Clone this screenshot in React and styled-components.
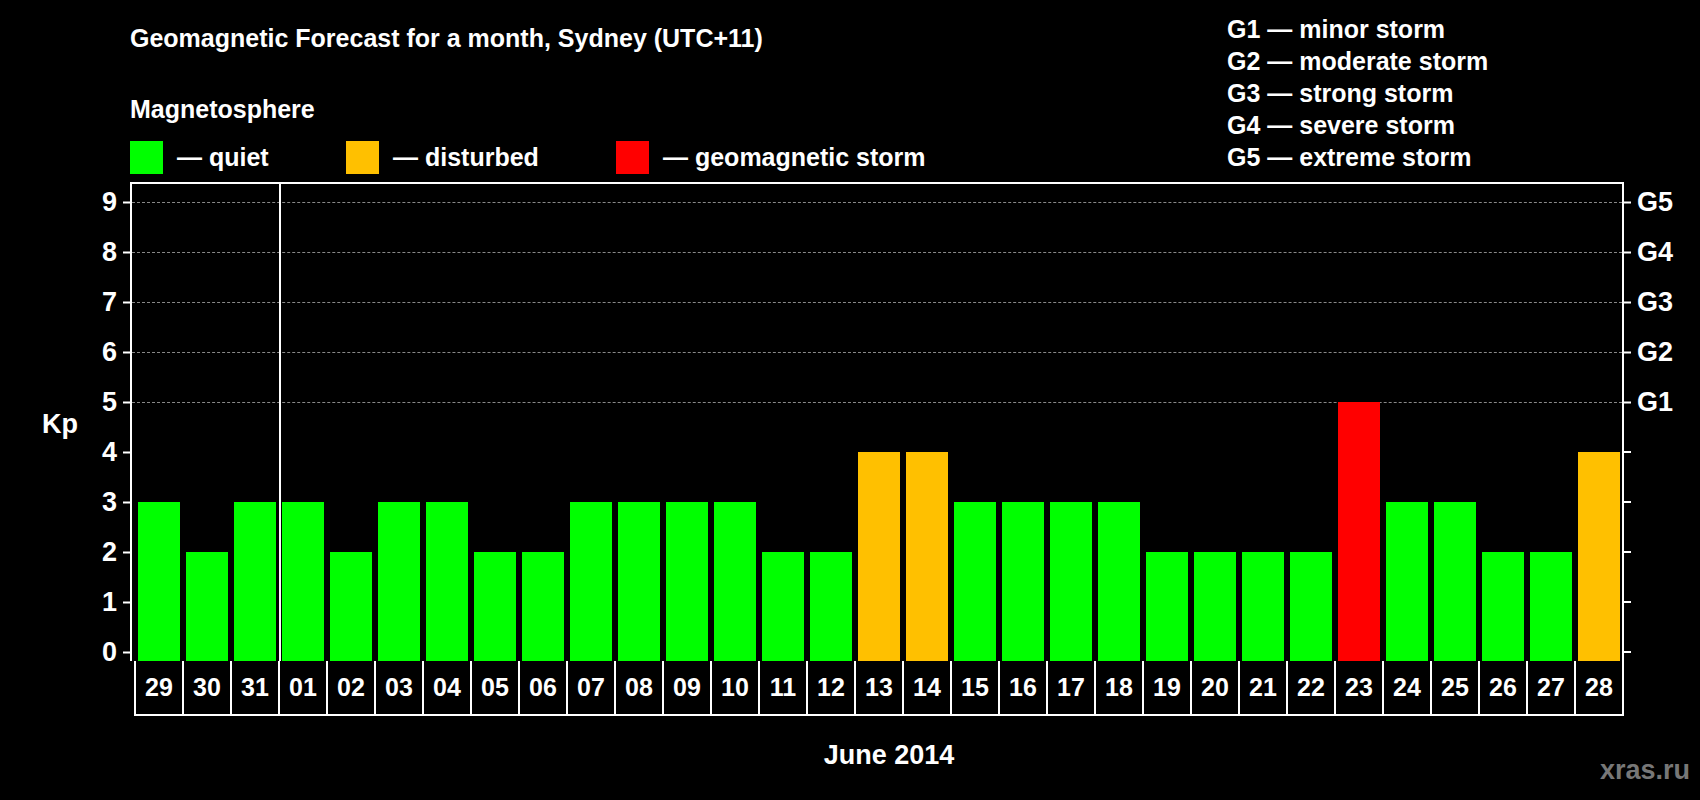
import React from 'react';
import styled, { createGlobalStyle } from 'styled-components';

const Global = createGlobalStyle`
  html, body { margin: 0; background: #000; }
  body { font-family: "Liberation Sans", Arial, sans-serif; font-weight: bold; color: #fff; }
`;

const Page = styled.div`
  width: 1700px;
  height: 800px;
  position: relative;
  overflow: hidden;
`;

const Header = styled.div`
  display: flex;
  height: 182px;
`;

const LeftHead = styled.div`
  width: 1097px;
  padding-left: 130px;
  padding-top: 23px;
`;

const Title = styled.div`
  font-size: 25px;
  line-height: 30px;
`;

const Sub = styled.div`
  font-size: 25px;
  line-height: 30px;
  margin-top: 41px;
`;

const Legend = styled.div`
  display: flex;
  align-items: center;
  margin-top: 17px;
`;

const LegendItem = styled.div`
  display: flex;
  align-items: center;
  width: ${p => p.$w}px;
  font-size: 25px;
`;

const Swatch = styled.span`
  width: 33px;
  height: 33px;
  background: ${p => p.$c};
  margin-right: 14px;
`;

const GList = styled.div`
  padding-top: 13px;
  font-size: 25px;
  line-height: 32px;
`;

const ChartRow = styled.div`
  display: flex;
  height: 479px;
`;

const Axis = styled.div`
  width: 130px;
  position: relative;
`;

const RightAxis = styled.div`
  flex: 1;
  position: relative;
`;

const Tick = styled.div`
  position: absolute;
  top: ${p => p.$y}px;
  ${p => (p.$right ? 'left: 0;' : 'right: 0;')}
  display: flex;
  align-items: center;
  flex-direction: ${p => (p.$right ? 'row' : 'row-reverse')};
  transform: translateY(-50%);
  font-size: 27px;
`;

const TickMark = styled.span`
  width: 7px;
  height: 2px;
  background: #fff;
  margin: 0 ${p => (p.$right ? '6px 0 0' : '0 0 6px')};
`;

const KpLabel = styled.div`
  position: absolute;
  left: 42px;
  top: 227px;
  font-size: 27px;
`;

const Box = styled.div`
  width: 1494px;
  box-sizing: border-box;
  border: 2px solid #fff;
  border-bottom: none;
  position: relative;
  display: flex;
  align-items: flex-end;
  padding-left: 6px;
  gap: 6px;
`;

const GridLine = styled.div`
  position: absolute;
  left: 0;
  right: 0;
  top: ${p => p.$y}px;
  border-top: 1px dashed #888;
`;

const Divider = styled.div`
  position: absolute;
  top: 0;
  bottom: 0;
  left: 147px;
  width: 2px;
  background: #fff;
`;

const Bar = styled.div`
  width: 42px;
  flex: none;
  background: ${p => p.$c};
  position: relative;
`;

const Days = styled.div`
  display: flex;
  margin-left: 134px;
  width: 1490px;
  height: 55px;
  border-bottom: 2px solid #fff;
  border-right: 2px solid #fff;
  box-sizing: border-box;
`;

const Day = styled.div`
  flex: 1;
  border-left: 2px solid #fff;
  display: flex;
  align-items: center;
  justify-content: center;
  font-size: 25px;
`;

const Month = styled.div`
  text-align: center;
  padding-left: 78px;
  margin-top: 24px;
  font-size: 27px;
`;

const Watermark = styled.div`
  position: absolute;
  right: 10px;
  bottom: 14px;
  font-size: 27px;
  color: #777;
`;

const colors = { q: '#00ff00', d: '#ffc000', s: '#ff0000' };
const days = ['29','30','31','01','02','03','04','05','06','07','08','09','10','11','12','13','14','15','16','17','18','19','20','21','22','23','24','25','26','27','28'];
const values = [3,2,3,3,2,3,3,2,2,3,3,3,3,2,2,4,4,3,3,3,3,2,2,2,2,5,3,3,2,2,4];

const yOf = v => 470 - 50 * v;
const colorOf = v => (v >= 5 ? colors.s : v === 4 ? colors.d : colors.q);

export default function App() {
  return (
    <Page>
      <Global />
      <Header>
        <LeftHead>
          <Title>Geomagnetic Forecast for a month, Sydney (UTC+11)</Title>
          <Sub>Magnetosphere</Sub>
          <Legend>
            <LegendItem $w={216}><Swatch $c={colors.q} />— quiet</LegendItem>
            <LegendItem $w={270}><Swatch $c={colors.d} />— disturbed</LegendItem>
            <LegendItem $w={340}><Swatch $c={colors.s} />— geomagnetic storm</LegendItem>
          </Legend>
        </LeftHead>
        <GList>
          <div>G1 — minor storm</div>
          <div>G2 — moderate storm</div>
          <div>G3 — strong storm</div>
          <div>G4 — severe storm</div>
          <div>G5 — extreme storm</div>
        </GList>
      </Header>
      <ChartRow>
        <Axis>
          <KpLabel>Kp</KpLabel>
          {[0,1,2,3,4,5,6,7,8,9].map(v => (
            <Tick key={v} $y={yOf(v)}><TickMark />{v}</Tick>
          ))}
        </Axis>
        <Box>
          {[5,6,7,8,9].map(v => <GridLine key={v} $y={yOf(v) - 2} />)}
          <Divider />
          {values.map((v, i) => (
            <Bar key={i} $c={colorOf(v)} style={{ height: 9 + 50 * v }} />
          ))}
        </Box>
        <RightAxis>
          {[0,1,2,3,4,5,6,7,8,9].map(v => (
            <Tick key={v} $right $y={yOf(v)}>
              <TickMark $right />{v >= 5 ? 'G' + (v - 4) : ''}
            </Tick>
          ))}
        </RightAxis>
      </ChartRow>
      <Days>
        {days.map(d => <Day key={d}>{d}</Day>)}
      </Days>
      <Month>June 2014</Month>
      <Watermark>xras.ru</Watermark>
    </Page>
  );
}
